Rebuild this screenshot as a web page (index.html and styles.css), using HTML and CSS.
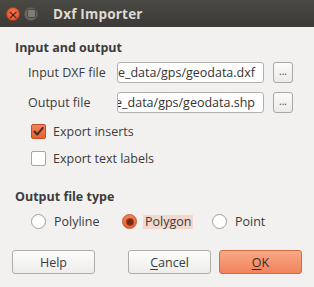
FILE: index.html
```html
<!DOCTYPE html>
<html lang="en">
<head>
  <meta charset="UTF-8" />
  <title>Dxf Importer</title>
  <link rel="stylesheet" href="styles.css">
</head>
<body>
  <div class="window">
    <div class="titlebar">
      <span class="tb-close">&times;</span>
      <span class="tb-min"><span class="tb-min-inner"></span></span>
      <span class="tb-title">Dxf Importer</span>
    </div>

    <div class="content">
      <div class="heading">Input and output</div>

      <div class="file-grid">
        <label class="file-label">Input DXF file</label>
        <div class="field"><span>e_data/gps/geodata.dxf</span></div>
        <button class="browse">...</button>

        <label class="file-label">Output file</label>
        <div class="field"><span>e_data/gps/geodata.shp</span></div>
        <button class="browse">...</button>
      </div>

      <div class="check-row">
        <span class="checkbox checked">
          <svg width="13" height="13" viewBox="0 0 13 13"><path d="M2.5 6.5 L5.2 9.5 L10.8 2.8" fill="none" stroke="#4a2c20" stroke-width="2" stroke-linecap="round" stroke-linejoin="round"/></svg>
        </span>
        <span>Export inserts</span>
      </div>
      <div class="check-row">
        <span class="checkbox"></span>
        <span>Export text labels</span>
      </div>

      <div class="heading heading-type">Output file type</div>

      <div class="radio-row">
        <div class="radio-item">
          <span class="radio"></span>
          <span>Polyline</span>
        </div>
        <div class="radio-item">
          <span class="radio checked"><span class="dot"></span></span>
          <span class="focused">Polygon</span>
        </div>
        <div class="radio-item">
          <span class="radio"></span>
          <span>Point</span>
        </div>
      </div>

      <div class="button-row">
        <button class="btn">Help</button>
        <div class="button-right">
          <button class="btn"><u>C</u>ancel</button>
          <button class="btn btn-ok"><u>O</u>K</button>
        </div>
      </div>
    </div>
  </div>
</body>
</html>
```

FILE: styles.css
```css
body {
  margin: 0;
  background-color: #f2f1f0;
  font-family: 'Open Sans', 'Noto Sans', sans-serif;
  font-size: 12.5px;
  color: #3c3c3c;
}
.window {
  width: 314px;
  height: 287px;
  overflow: hidden;
}
.titlebar {
  height: 27px;
  display: flex;
  align-items: center;
  padding-left: 6px;
  background: linear-gradient(#4a4943, #3b3a36);
}
.tb-close {
  width: 14px;
  height: 14px;
  border-radius: 50%;
  background: radial-gradient(circle at 50% 40%, #f57a52, #df4b22);
  border: 1px solid #b53c1b;
  color: #4a1c0e;
  font-size: 13px;
  line-height: 13px;
  text-align: center;
  font-family: 'DejaVu Sans', sans-serif;
  box-sizing: border-box;
}
.tb-min {
  width: 14px;
  height: 14px;
  margin-left: 4px;
  border-radius: 50%;
  background: #6a6964;
  border: 1px solid #53524e;
  box-sizing: border-box;
  display: flex;
  align-items: center;
  justify-content: center;
}
.tb-min-inner {
  width: 7px;
  height: 7px;
  border-radius: 2px;
  border: 1px solid #4c4b47;
  background: #7d7c77;
}
.tb-title {
  margin-left: 15px;
  color: #dfdbd2;
  font-weight: bold;
  font-size: 13.5px;
  letter-spacing: 0.2px;
}
.content {
  padding: 13px 0 0 15px;
}
.heading {
  font-weight: bold;
  height: 16px;
  line-height: 16px;
}
.file-grid {
  display: grid;
  grid-template-columns: 80px 147px 20px;
  grid-auto-rows: 21px;
  column-gap: 9px;
  row-gap: 9px;
  margin-top: 6px;
  padding-left: 13px;
  align-items: center;
}
.file-label {
  white-space: nowrap;
}
.field {
  height: 21px;
  box-sizing: border-box;
  background: white;
  border: 1px solid #b3b1ad;
  border-radius: 3px;
  overflow: hidden;
  display: flex;
  justify-content: flex-end;
  align-items: center;
  padding-right: 8px;
  white-space: nowrap;
  color: #333;
}
.browse {
  height: 21px;
  width: 20px;
  padding: 0 0 4px;
  box-sizing: border-box;
  border: 1px solid #a9a7a3;
  border-radius: 3px;
  background: linear-gradient(#fbfbfa, #ebeae8);
  font-family: inherit;
  font-size: 10px;
  color: #3c3c3c;
}
.check-row {
  height: 27px;
  display: flex;
  align-items: center;
  padding-left: 16px;
  gap: 7px;
}
.file-grid + .check-row {
  margin-top: 5px;
}
.checkbox {
  width: 15px;
  height: 15px;
  box-sizing: border-box;
  border: 1px solid #a8a6a2;
  border-radius: 2px;
  background: white;
  display: flex;
  align-items: center;
  justify-content: center;
}
.checkbox.checked {
  background: linear-gradient(#f2865a, #e6622f);
  border-color: #bd5027;
}
.heading-type {
  margin-top: 17px;
}
.radio-row {
  display: grid;
  grid-template-columns: 91px 90px auto;
  margin-top: 8px;
  padding-left: 16px;
  height: 16px;
}
.radio-item {
  display: flex;
  align-items: center;
  gap: 8px;
}
.radio {
  width: 15px;
  height: 15px;
  box-sizing: border-box;
  border: 1px solid #a09e9a;
  border-radius: 50%;
  background: white;
  display: flex;
  align-items: center;
  justify-content: center;
}
.radio.checked {
  background: linear-gradient(#f2835a, #e4602f);
  border-color: #c4532a;
}
.dot {
  width: 6px;
  height: 6px;
  border-radius: 50%;
  background: #6e2c17;
  box-shadow: 0 0 0 1px #a9421f;
}
.focused {
  background: #f3d9cd;
  padding: 0 2px;
  margin-left: -2px;
  line-height: 14px;
}
.button-row {
  display: flex;
  justify-content: space-between;
  margin-top: 21px;
  margin-left: -3px;
  width: 290px;
}
.button-right {
  display: flex;
  gap: 8px;
}
.btn {
  width: 83px;
  height: 24px;
  box-sizing: border-box;
  border: 1px solid #afada9;
  border-radius: 3px;
  background: linear-gradient(#fcfcfb, #eeedeb);
  font-family: inherit;
  font-size: 12.5px;
  color: #3c3c3c;
  padding: 0;
}
.btn u {
  text-underline-offset: 2px;
}
.btn-ok {
  background: linear-gradient(#f9a887, #f0835b);
  border-color: #d06c46;
  color: #3a2a24;
}
```
